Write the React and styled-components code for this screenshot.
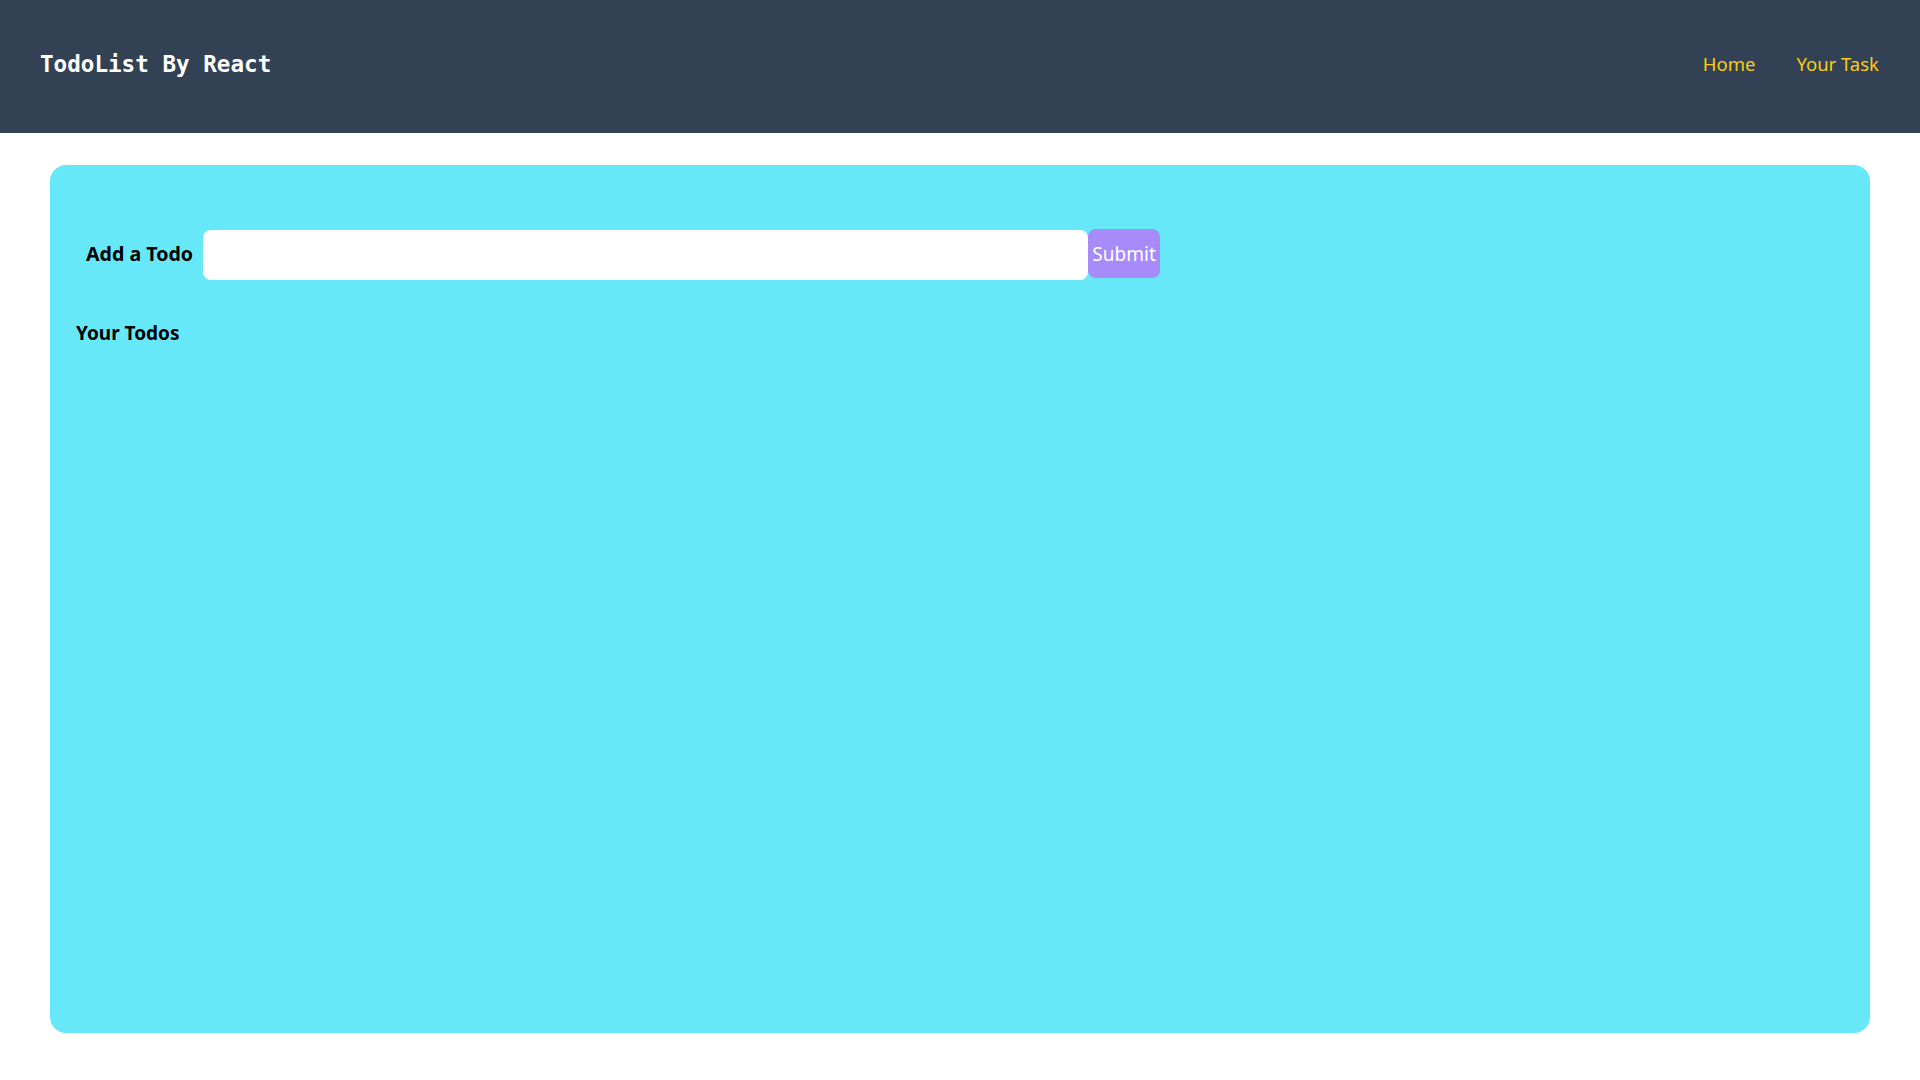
import React, { useState } from 'react';
import styled, { createGlobalStyle } from 'styled-components';

const GlobalStyle = createGlobalStyle`
  body {
    margin: 0;
    background: #ffffff;
    font-family: "Noto Sans", "Open Sans", sans-serif;
  }
`;

const Nav = styled.nav`
  height: 133px;
  background-color: #334155;
  display: flex;
  justify-content: space-between;
  align-items: center;
  padding: 0 41px 6px 40px;
  box-sizing: border-box;
`;

const Brand = styled.span`
  font-family: "DejaVu Sans Mono", "Liberation Mono", monospace;
  font-weight: bold;
  font-size: 22.6px;
  color: #ffffff;
`;

const NavLinks = styled.ul`
  list-style: none;
  margin: 0;
  padding: 0;
  display: flex;
  gap: 41px;
`;

const NavLink = styled.li`
  color: #facc15;
  font-size: 18.5px;
  cursor: pointer;
`;

const Card = styled.main`
  margin: 32px 50px 47px;
  height: 868px;
  background-color: #67e8f9;
  border-radius: 16px;
  padding: 65px 26px 0;
  box-sizing: border-box;
`;

const AddRow = styled.div`
  display: flex;
  align-items: center;
  padding-left: 10px;
`;

const Label = styled.h2`
  margin: -4px 10px 0 0;
  font-size: 19.6px;
  font-weight: bold;
  color: #000;
`;

const Input = styled.input`
  width: 885px;
  height: 50px;
  border: none;
  border-radius: 8px;
  background: #fff;
  box-sizing: border-box;
  padding: 0 10px;
  font-size: 18px;
  outline: none;
`;

const Button = styled.button`
  width: 72px;
  height: 49px;
  margin-top: -3px;
  border: none;
  border-radius: 8px;
  background-color: #a78bfa;
  color: #fff;
  font-family: "Noto Sans", "Open Sans", sans-serif;
  font-size: 19px;
  padding: 0;
  cursor: pointer;
`;

const Heading = styled.h2`
  margin: 40px 0 0;
  font-size: 19px;
  font-weight: bold;
  color: #000;
`;

function App() {
  const [todo, setTodo] = useState('');

  return (
    <>
      <GlobalStyle />
      <Nav>
        <Brand>TodoList By React</Brand>
        <NavLinks>
          <NavLink>Home</NavLink>
          <NavLink>Your Task</NavLink>
        </NavLinks>
      </Nav>
      <Card>
        <AddRow>
          <Label>Add a Todo</Label>
          <Input value={todo} onChange={e => setTodo(e.target.value)} />
          <Button>Submit</Button>
        </AddRow>
        <Heading>Your Todos</Heading>
      </Card>
    </>
  );
}

export default App;
